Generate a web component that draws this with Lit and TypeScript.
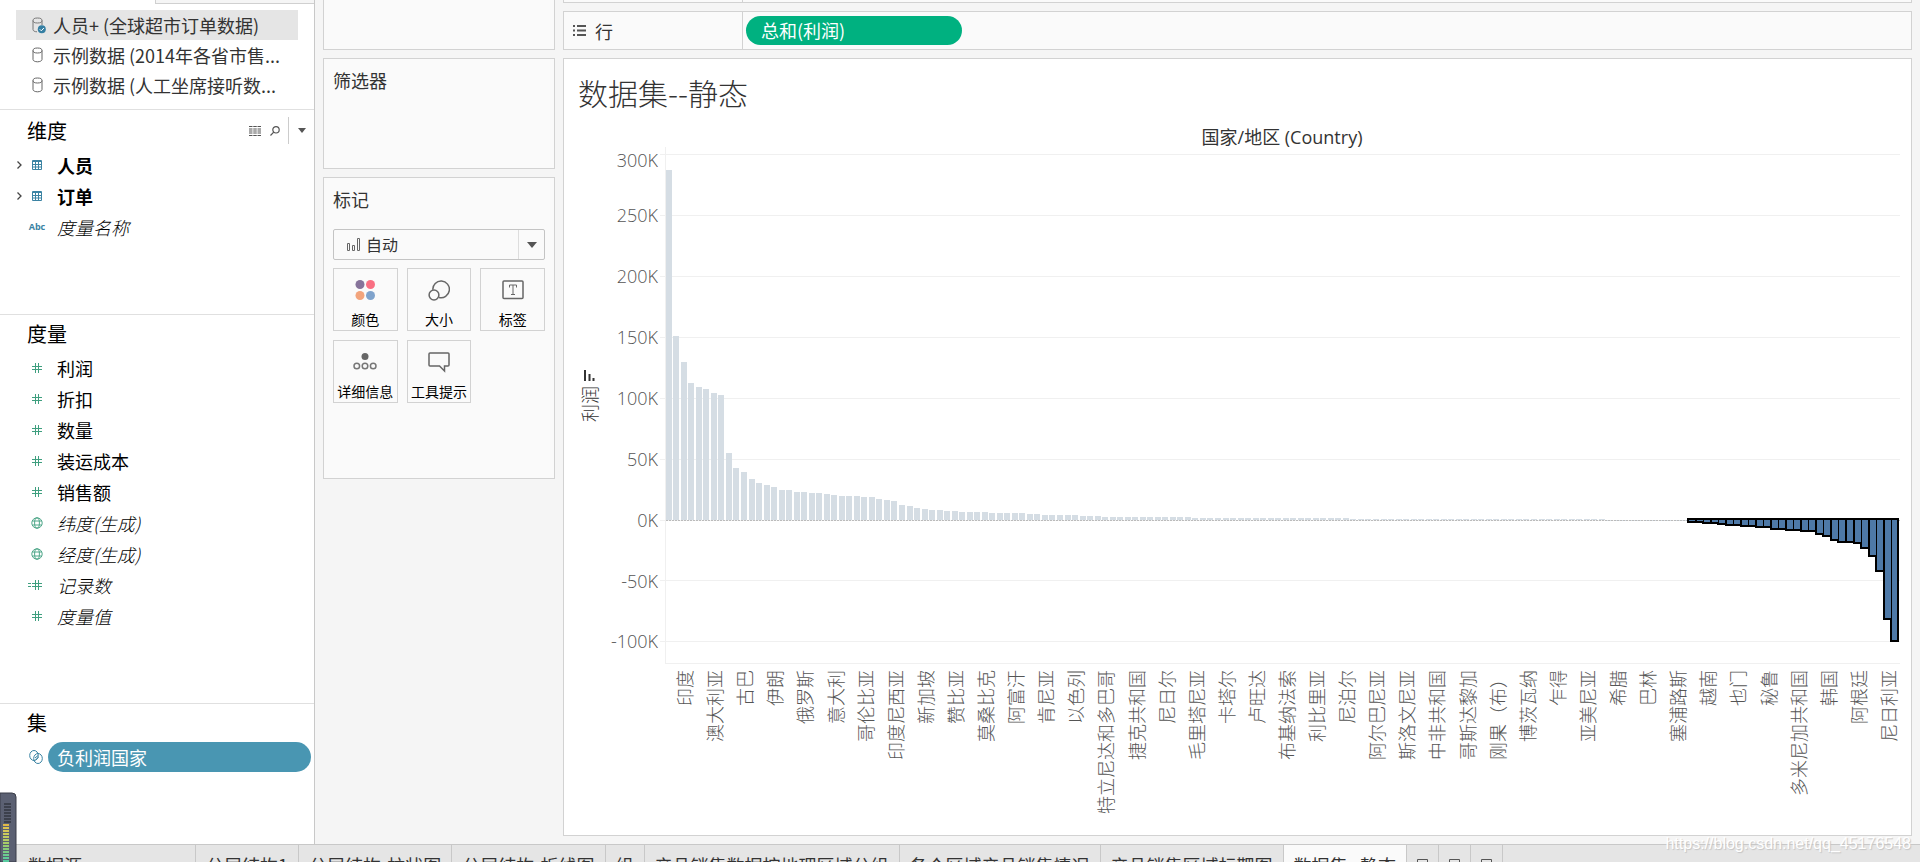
import { LitElement, html, svg, css } from "lit";
import { customElement, state } from "lit/decorators.js";
import { classMap } from "lit/directives/class-map.js";

type Field = { name: string; icon: string; kind?: string; expandable?: boolean };

const SOURCES = ["人员+ (全球超市订单数据)", "示例数据 (2014年各省市售...", "示例数据 (人工坐席接听数..."];

const DIMENSIONS: Field[] = [
  { name: "人员", icon: "table", kind: "bold", expandable: true },
  { name: "订单", icon: "table", kind: "bold", expandable: true },
  { name: "度量名称", icon: "abc", kind: "italic" },
];

const MEASURES: Field[] = [
  { name: "利润", icon: "hash" },
  { name: "折扣", icon: "hash" },
  { name: "数量", icon: "hash" },
  { name: "装运成本", icon: "hash" },
  { name: "销售额", icon: "hash" },
  { name: "纬度(生成)", icon: "globe", kind: "italic" },
  { name: "经度(生成)", icon: "globe", kind: "italic" },
  { name: "记录数", icon: "calc", kind: "italic" },
  { name: "度量值", icon: "hash", kind: "italic" },
];

const SHEETS = [
  "分层结构1", "分层结构-柱状图", "分层结构-折线图", "组", "产品销售数据按地理区域分组",
  "各个区域产品销售情况", "产品销售区域标靶图", "数据集--静态",
];

const COUNTRIES = [
  "印度", "澳大利亚", "古巴", "伊朗", "俄罗斯", "意大利", "哥伦比亚", "印度尼西亚", "新加坡", "赞比亚",
  "莫桑比克", "阿富汗", "肯尼亚", "以色列", "特立尼达和多巴哥", "捷克共和国", "尼日尔", "毛里塔尼亚",
  "卡塔尔", "卢旺达", "布基纳法索", "利比里亚", "尼泊尔", "阿尔巴尼亚", "斯洛文尼亚", "中非共和国",
  "哥斯达黎加", "刚果（布）", "博茨瓦纳", "乍得", "亚美尼亚", "希腊", "巴林", "塞浦路斯", "越南", "也门",
  "秘鲁", "多米尼加共和国", "韩国", "阿根廷", "尼日利亚",
];

const TICKS: [string, number][] = [
  ["300K", 7], ["250K", 68], ["200K", 129], ["150K", 190], ["100K", 251], ["50K", 312], ["0K", 373], ["-50K", 433], ["-100K", 494],
];

// Bar lengths in chart units (61 units = 50K), as [length, how many bars].
const GAINS: [number, number][] = [
  [350, 1], [184, 1], [158, 1], [137, 1], [133, 1], [131, 1], [127, 1], [125, 1], [67, 1], [52, 1],
  [48, 1], [41, 1], [37, 1], [35, 1], [33, 1], [30, 2], [28, 2], [27, 2], [26, 1], [25, 1], [24, 3],
  [23, 2], [21, 1], [20, 1], [19, 1], [15, 1], [14, 1], [12, 1], [11, 1], [10, 2], [9, 2], [8, 4],
  [7, 5], [6, 2], [5, 5], [4, 3], [3, 12], [2, 21], [1, 34], [0, 11],
];
const LOSSES: [number, number][] = [
  [1, 2], [2, 2], [3, 1], [4, 2], [5, 2], [6, 2], [8, 2], [9, 2], [10, 2], [13, 1], [15, 1], [19, 1],
  [21, 2], [22, 1], [27, 1], [35, 1], [50, 1], [98, 1], [120, 1],
];
const spread = (runs: [number, number][]) => runs.flatMap(([v, n]) => Array<number>(n).fill(v));

const icons: Record<string, unknown> = {
  db: html`<svg width="11" height="16" viewBox="0 0 11 16" fill="none" stroke="#666"><ellipse cx="5.5" cy="3.5" rx="4.5" ry="2.5"/><path d="M1 3.5v9c0 1.3 2 2.3 4.5 2.3s4.5-1 4.5-2.3v-9"/></svg>`,
  dbOn: html`<svg width="14" height="17" viewBox="0 0 14 17" fill="none" stroke="#777"><ellipse cx="5.5" cy="3.5" rx="4.5" ry="2.5"/><path d="M1 3.5v9c0 1.3 1.6 2.3 4 2.3M10 3.5v4.5"/><circle cx="9.8" cy="12.3" r="4" fill="#357fa3" stroke="none"/><path d="M7.8 12.3l1.500 1.500 2.600-2.800" stroke="#fff"/></svg>`,
  table: html`<svg width="10" height="10" viewBox="0 0 10 10" fill="none" stroke="#3b83a3"><path d="M.5.5h9v9h-9zM0 1.5h10M0 4.5h10M0 7h10M3.5 2v8M6.5 2v8"/></svg>`,
  abc: html`<span class="abc">Abc</span>`,
  hash: html`<svg width="10" height="10" viewBox="0 0 10 10" stroke="#3f9f7f"><path d="M3.5 0v10M6.5 0v10M0 3.5h10M0 6.5h10" fill="none"/></svg>`,
  calc: html`<svg width="14" height="10" viewBox="0 0 14 10" stroke="#3f9f7f"><path d="M7.5 0v10M10.5 0v10M4 3.5h10M4 6.5h10M0 3.5h3M0 6.500h3" fill="none"/></svg>`,
  globe: html`<svg width="12" height="12" viewBox="0 0 12 12" fill="none" stroke="#3f9f7f" stroke-width=".9"><circle cx="6" cy="6" r="5.2"/><ellipse cx="6" cy="6" rx="2.4" ry="5.2"/><path d="M1.300 4h9.400M1.300 8h9.400"/></svg>`,
  set: html`<svg width="14" height="14" viewBox="0 0 14 14" fill="none" stroke="#3b83a3"><ellipse cx="5" cy="5.5" rx="4.300" ry="5"/><ellipse cx="9" cy="8.5" rx="4.300" ry="5"/><path d="M6 8l3-2.500M6.500 10l3-3"/></svg>`,
  color: html`<svg width="22" height="22" viewBox="0 0 22 22"><circle cx="6" cy="5.500" r="4.500" fill="#86739a"/><circle cx="16.500" cy="5.500" r="4.500" fill="#f96f82"/><circle cx="6" cy="16.500" r="4.500" fill="#f2a47c"/><circle cx="16.500" cy="16.500" r="4.500" fill="#7fa3cc"/></svg>`,
  size: html`<svg width="22" height="22" viewBox="0 0 22 22" fill="none" stroke="#666" stroke-width="1.500"><path d="M4.800 10.800a8.300 8.300 0 1 1 6.200 7.600"/><circle cx="6" cy="16" r="4.900"/></svg>`,
  label: html`<svg width="22" height="22" viewBox="0 0 22 22" fill="none" stroke="#666"><rect x="1" y="2" width="20" height="17.500" rx="1" stroke-width="1.500"/><path d="M7.500 8.500v-2.500h7v2.500M11 6v9.500M9 15.500h4"/></svg>`,
  detail: html`<svg width="24" height="22" viewBox="0 0 24 22" fill="none" stroke="#777" stroke-width="1.500"><circle cx="12" cy="5.500" r="3.500" fill="#666" stroke="none"/><circle cx="3.800" cy="15" r="2.800"/><circle cx="12" cy="15" r="2.800"/><circle cx="20.200" cy="15" r="2.800"/></svg>`,
  tooltip: html`<svg width="22" height="22" viewBox="0 0 22 22" fill="none" stroke="#666" stroke-width="1.500"><path d="M2 2h18q1 0 1 1v11q0 1-1 1h-3.500v5l-5-5H2q-1 0-1-1V3q0-1 1-1z"/></svg>`,
  sort: html`<svg width="11" height="11" viewBox="0 0 11 11" fill="#333"><path d="M0 0h2v11H0zM4.500 4h2v7h-2zM8.500 8h2v3h-2z"/></svg>`,
};

@customElement("profit-chart")
export class ProfitChart extends LitElement {
  static styles = css`
    :host { display: grid; grid-template-columns: 22px 60px minmax(0, 1fr); padding: 0 11px 0 14px; color: #555;
      font: 300 18px/22px "Open Sans", "Noto Sans CJK SC", sans-serif; }
    .caption { grid-column: 3; text-align: center; color: #333; font-weight: 400; line-height: 20px; padding: 2px 0 0 4px; }
    .axis { grid-column: 1; display: flex; flex-direction: column; align-items: center; justify-content: center; gap: 5px; padding-bottom: 20px; color: #333; }
    .side { writing-mode: vertical-rl; text-orientation: sideways; transform: rotate(180deg); white-space: nowrap;
      font-family: "Noto Sans CJK SC", sans-serif; line-height: 22px; }
    .ticks { grid-column: 2; height: 517px; text-align: right; padding-right: 2px; }
    .tick { line-height: 61px; }
    .tick:first-child { line-height: 26px; height: 38px; }
    .tick:nth-child(8) { line-height: 60px; }
    .plot { display: block; width: 100%; height: 517px; }
    .names { grid-column: 3; display: grid; grid-template-columns: repeat(41, minmax(0, 1fr)); justify-items: center; align-items: start; margin: 6px -3px 0 9px; }
  `;

  private bars() {
    const gains = spread(GAINS);
    const losses = spread(LOSSES);
    const left = (i: number) => Math.round(5.75 + i * 7.524);
    const zero = 373;
    const start = gains.length;
    return svg`
      ${gains.map((v, i) => svg`<rect x=${left(i)} y=${zero - v} width="6" height=${v || 1} fill="#d5dde4"></rect>`)}
      <path d="M6 373.500H1240" stroke="#bbb" stroke-dasharray="2 1"></path>
      ${losses.map((v, i) => svg`<rect x=${left(start + i) - 2} y=${zero - 2} width=${i === losses.length - 1 ? 9 : 10} height=${v + 4} fill="#000"></rect>`)}
      ${losses.map((v, i) => svg`<rect x=${left(start + i)} y=${zero} width=${i === losses.length - 1 ? 5 : 6} height=${v} fill="#4e79a7"></rect>`)}`;
  }

  render() {
    return html`
      <div class="caption">国家/地区 (Country)</div>
      <div class="axis">${icons.sort}<span class="side">利润</span></div>
      <div class="ticks">${TICKS.map(([t]) => html`<div class="tick">${t}</div>`)}</div>
      <svg class="plot" viewBox="0 0 1240 517" preserveAspectRatio="none" shape-rendering="crispEdges" role="img" aria-label="利润">
        ${TICKS.map(([, y]) => svg`<path d="M0 ${y + 0.5}H1240" stroke="#f0f0f0"></path>`)}
        <path d="M5.5 0V517M5 516.5H1240" stroke="#f0f0f0" fill="none"></path>
        ${this.bars()}
      </svg>
      <div class="names">${COUNTRIES.map((c) => html`<span class="side">${c}</span>`)}</div>
    `;
  }
}

@customElement("data-pane")
export class DataPane extends LitElement {
  @state() private source = 0;

  static styles = css`
    :host { display: flex; flex-direction: column; background: #fff; border-right: 1px solid #c8c8c8; overflow: hidden; }
    button { font: inherit; color: inherit; background: none; border: 0; padding: 0; text-align: left; }
    ul { list-style: none; margin: 0; padding: 0; }
    .top { height: 3px; margin-left: 155px; background: #f5f5f5; border: solid #d0d0d0; border-width: 0 0 1px 1px; }
    .sources { padding: 6px 16px 9px; color: #333; }
    .source { display: flex; align-items: center; width: 100%; height: 30px; padding-left: 16px; white-space: nowrap; }
    .source.on { background: #e5e5e5; }
    .source svg { flex: none; }
    .mark { display: flex; width: 21px; flex: none; }
    .section { border-top: 1px solid #e0e0e0; }
    .dims { min-height: 204px; }
    .meas { min-height: 388px; }
    .head { display: flex; align-items: center; height: 31px; padding: 3px 8px 3px 27px; }
    .dims .head { padding-top: 5px; }
    .head h2 { flex: 1; margin: 0; font-size: 20px; font-weight: 400; line-height: 30px; }
    .tools { display: flex; align-items: center; height: 27px; }
    .tools button { display: flex; align-items: center; }
    .tools .find { margin: 0 8px 0 9px; }
    .tools .menu { height: 27px; padding-left: 9px; border-left: 1px solid #ccc; }
    .field { display: flex; align-items: center; height: 31px; width: 100%; white-space: nowrap; }
    .glyph { width: 57px; flex: none; display: grid; grid-template-columns: 15px 1fr; align-items: center; }
    .glyph svg { display: block; }
    .open { grid-area: 1 / 1; padding-left: 16px; width: 7px; }
    .kind { grid-area: 1 / 2; width: 44px; display: flex; justify-content: center; box-sizing: border-box; }
    .calc .kind { padding-right: 4px; }
    .bold { font-weight: 700; }
    .italic { font-style: italic; font-weight: 300; }
    .abc { font: 700 9px/12px "Open Sans", sans-serif; color: #3b83a3; }
    .set { display: flex; align-items: center; gap: 5px; padding: 1px 3px 0 29px; }
    .pill { flex: 1; height: 30px; border-radius: 15px; background: #4996b2; color: #fff; padding: 0 0 1px 9px; }
  `;

  private field = (f: Field) => html`
    <li><button class=${classMap({ field: true, calc: f.icon === "calc", [f.kind ?? "plain"]: true })}>
      <span class="glyph">
        ${f.expandable ? html`<svg class="open" width="7" height="8" viewBox="0 0 7 8" fill="none" stroke="#444" stroke-width="1.3"><path d="M1.500.500L5 4 1.500 7.500"/></svg>` : ""}
        <span class="kind">${icons[f.icon]}</span>
      </span>${f.name}</button></li>`;

  render() {
    return html`
      <div class="top"></div>
      <div class="sources">
        ${SOURCES.map((s, i) => html`<button class=${classMap({ source: true, on: i === this.source })} @click=${() => (this.source = i)}>
          <span class="mark">${i === this.source ? icons.dbOn : icons.db}</span>${s}</button>`)}
      </div>
      <section class="section dims">
        <div class="head"><h2>维度</h2>
          <div class="tools">
            <button aria-label="列表"><svg width="12" height="10" viewBox="0 0 12 10" stroke="#555"><path d="M0 .5h12M0 3h12M0 5h12M0 7h12M0 9.5h12" stroke-dasharray="3.500 .75"/></svg></button>
            <button class="find" aria-label="查找"><svg width="10" height="10" viewBox="0 0 10 10" fill="none" stroke="#555" stroke-width="1.2"><circle cx="6" cy="3.800" r="3.200"/><path d="M3.700 6.200L.5 9.500"/></svg></button>
            <button class="menu" aria-label="菜单"><svg width="8" height="5" viewBox="0 0 8 5"><path d="M0 0h8L4 5z" fill="#555"/></svg></button>
          </div>
        </div>
        <ul>${DIMENSIONS.map(this.field)}</ul>
      </section>
      <section class="section meas">
        <div class="head"><h2>度量</h2></div>
        <ul>${MEASURES.map(this.field)}</ul>
      </section>
      <section class="section">
        <div class="head"><h2>集</h2></div>
        <div class="set">${icons.set}<button class="pill">负利润国家</button></div>
      </section>
    `;
  }
}

@customElement("marks-column")
export class MarksColumn extends LitElement {
  static styles = css`
    :host { display: flex; flex-direction: column; gap: 8px; }
    .card { box-sizing: border-box; background: #fafafa; border: 1px solid #d2d2d2; padding: 8px 9px; color: #333; }
    .pages { height: 50px; border-top: 0; }
    .filters { height: 111px; }
    .marks { height: 302px; }
    h2 { margin: 0; font-size: 18px; font-weight: 400; line-height: 26px; }
    .type { display: grid; grid-template-columns: 185px 1fr; margin: 17px 0 8px; height: 31px; }
    .type > * { grid-row: 1; align-self: center; }
    select { grid-column: 1 / 3; appearance: none; width: 100%; height: 31px; font: inherit; font-size: 16px; color: #333; padding: 0 30px 2px 32px; background: #fafafa; border: 1px solid #c4c4c4; border-radius: 2px; }
    .lead { grid-column: 1; margin-left: 14px; pointer-events: none; z-index: 1; }
    .drop { grid-column: 2; height: 29px; border-left: 1px solid #ddd; display: flex; align-items: center; padding-left: 8px; pointer-events: none; z-index: 1; }
    .grid { display: grid; grid-template-columns: repeat(3, 1fr); gap: 9px; }
    .grid button { height: 63px; padding: 10px 0 0; border: 1px solid #d2d2d2; background: #fafafa; color: #000; font: inherit; font-size: 14px; line-height: 20px; display: flex; flex-direction: column; align-items: center; gap: 8px; white-space: nowrap; }
    .grid svg { flex: none; }
  `;

  render() {
    const marks = [["color", "颜色"], ["size", "大小"], ["label", "标签"], ["detail", "详细信息"], ["tooltip", "工具提示"]];
    return html`
      <div class="card pages"></div>
      <div class="card filters"><h2>筛选器</h2></div>
      <div class="card marks">
        <h2>标记</h2>
        <div class="type">
          <select aria-label="标记"><option>自动</option></select>
          <svg class="lead" width="13" height="13" viewBox="0 0 13 13" fill="none" stroke="#666"><path d="M.5 5.500h2v7h-2zM5.500 7.500h2v5h-2zM10.500.500h2v12h-2z"/></svg>
          <span class="drop"><svg width="10" height="6" viewBox="0 0 10 6"><path d="M0 0h10L5 6z" fill="#555"/></svg></span>
        </div>
        <div class="grid">${marks.map(([k, t]) => html`<button>${icons[k]}<span>${t}</span></button>`)}</div>
      </div>
    `;
  }
}

@customElement("app-root")
export class AppRoot extends LitElement {
  @state() private sheet = SHEETS.length - 1;

  static styles = css`
    :host { position: relative; display: flex; flex-direction: column; height: 100vh; overflow: hidden; background: #f5f5f5;
      color: #000; font: 400 18px/26px "Noto Sans CJK SC", sans-serif; }
    button { font: inherit; border: 0; padding: 0; text-align: left; }
    .work { flex: 1; min-height: 0; display: grid; grid-template-columns: 315px 232px minmax(0, 1fr); }
    .side { margin: 0 -8px 0 8px; }
    .main { display: flex; flex-direction: column; margin: 0 8px 8px 16px; min-width: 0; }
    .shelf { display: flex; align-items: center; height: 37px; margin: 8px 0; background: #fafafa; border: 1px solid #d2d2d2; color: #333; }
    .shelf.cut { height: 2px; margin: 0; border-top: 0; }
    .name { display: flex; align-items: center; gap: 9px; align-self: stretch; width: 169px; padding-left: 9px; border-right: 1px solid #d2d2d2; }
    .pill { width: 216px; height: 29px; margin-left: 3px; padding: 0 0 2px 15px; border-radius: 15px; background: #00b180; color: #fff; }
    .view { flex: 1; min-height: 0; background: #fff; border: 1px solid #d2d2d2; }
    h1 { margin: 12px 14px; font-size: 30px; line-height: 42px; font-weight: 300; color: #333; }
    .tabs { display: flex; flex: none; height: 17px; overflow: hidden; background: #e5e5e5; border-top: 1px solid #c8c8c8; color: #333; }
    .tab { flex: none; height: 39px; padding: 0 10px; background: none; color: inherit; border-right: 1px solid #c8c8c8; white-space: nowrap; }
    .tab.on { background: #fafafa; }
    .tab.first { width: 196px; padding-left: 28px; }
    .tab.add { display: flex; align-items: center; justify-content: center; width: 32px; padding: 0; }
    .meter { position: absolute; left: 0; bottom: 0; }
    .mark { position: absolute; right: 9px; bottom: 8px; font: 16px/20px "Liberation Sans", sans-serif; color: #fff; text-shadow: 1px 1px 1px #c4c4c4; }
  `;

  render() {
    const hues = ["#e0b848", "#dcc350", "#d4c858", "#cccc5c", "#c0cc60", "#b4cc64", "#a8cc68", "#98cc70", "#88cc78", "#78cc84", "#6ccc90", "#60cc98", "#58cca0"];
    return html`
      <div class="work">
        <data-pane></data-pane>
        <marks-column class="side"></marks-column>
        <main class="main">
          <div class="shelf cut"><span class="name"></span></div>
          <div class="shelf">
            <span class="name"><svg width="13" height="11" viewBox="0 0 13 11" fill="#555"><path d="M0 0h2v2H0zM4 0h9v2H4zM0 4.500h2v2H0zM4 4.500h9v2H4zM0 9h2v2H0zM4 9h9v2H4z"/></svg>行</span>
            <button class="pill">总和(利润)</button>
          </div>
          <div class="view">
            <h1>数据集--静态</h1>
            <profit-chart></profit-chart>
          </div>
        </main>
      </div>
      <nav class="tabs">
        <button class="tab first">数据源</button>
        ${SHEETS.map((s, i) => html`<button class=${classMap({ tab: true, on: i === this.sheet })} @click=${() => (this.sheet = i)}>${s}</button>`)}
        ${["新建工作表", "新建仪表板", "新建故事"].map((n) => html`<button class="tab add" aria-label=${n}><svg width="11" height="12" viewBox="0 0 11 12" fill="none" stroke="#555"><path d="M.5.5h10v11H.5zM.5 3.500h10M5.500 4v8"/></svg></button>`)}
      </nav>
      <svg class="meter" width="20" height="70" viewBox="0 0 20 70">
        <path d="M0 1h12q4 0 4 4v65H0z" fill="#5b6072" stroke="#3a3d48"/>
        ${[0, 1, 2, 3, 4, 5, 6].map((i) => svg`<rect x="4" y=${11 + i * 3} width="7" height="2" fill="#3c404c"></rect>`)}
        ${hues.map((h, i) => svg`<rect x="3" y=${32 + i * 3} width="6" height="2" fill=${h}></rect>`)}
      </svg>
      <span class="mark">https://blog.csdn.net/qq_45176548</span>
    `;
  }
}
